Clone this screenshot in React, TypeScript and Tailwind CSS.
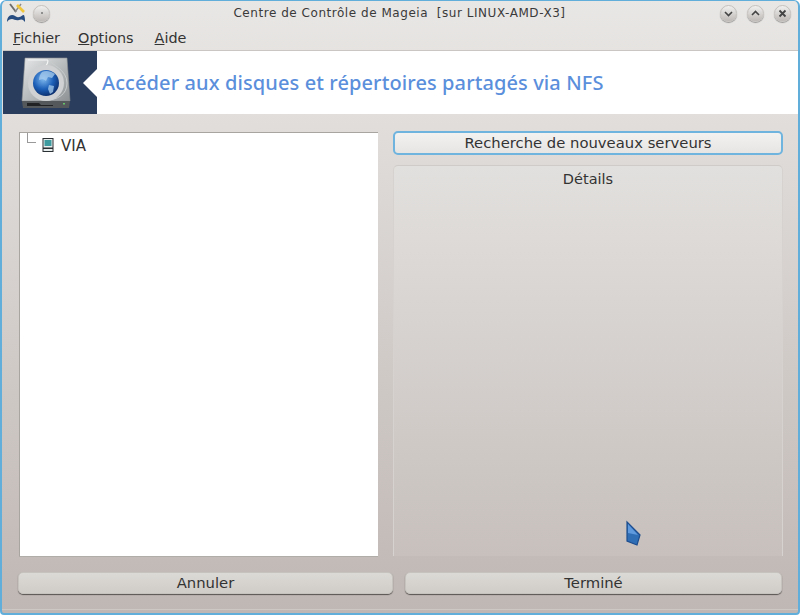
import React from "react";

const RoundBtn = ({ children }: { children?: React.ReactNode }) => (
  <div className="w-[17px] h-[17px] rounded-full bg-gradient-to-b from-[#f2f1f0] to-[#bdb9b6] border border-[#c4c1be] shadow-[0_1px_1px_rgba(0,0,0,0.35)] flex items-center justify-center">
    {children}
  </div>
);

const Button = ({ label, focused }: { label: string; focused?: boolean }) => (
  <div
    className={`rounded-[5px] flex items-center justify-center text-[14.8px] text-[#333] bg-gradient-to-b ${
      focused
        ? "h-[24px] from-[#f3f2f1] to-[#e7e5e3] border-2 border-[#6fb4de]"
        : "h-[22px] from-[#dcdad6] to-[#d0ccc8] border border-[#c6c2be] shadow-[0_1px_1px_rgba(0,0,0,0.55)]"
    }`}
  >
    {label}
  </div>
);

const DiskLogo = () => (
  <svg width="50" height="52" viewBox="0 0 50 52">
    <defs>
      <linearGradient id="case" x1="0" y1="0" x2="1" y2="1">
        <stop offset="0" stopColor="#e6e8e9" />
        <stop offset="1" stopColor="#8d9193" />
      </linearGradient>
      <radialGradient id="globe" cx="0.4" cy="0.35" r="0.7">
        <stop offset="0" stopColor="#7fb8ee" />
        <stop offset="0.55" stopColor="#1c5fb8" />
        <stop offset="1" stopColor="#0b2a66" />
      </radialGradient>
    </defs>
    <path d="M4 1H46L49 44H1Z" fill="url(#case)" stroke="#8a8e90" strokeWidth="0.6" />
    <path d="M7 3H27C27 8 24 10 22 12 18 12 13 14 10 19" fill="none" stroke="#f4f5f5" strokeWidth="1.2" />
    <path d="M27 2C30 8 46 12 46 26 46 38 36 43 25 43" fill="none" stroke="#c9cccd" strokeWidth="1" />
    <circle cx="25" cy="26" r="18" fill="#cfd1d2" />
    <circle cx="25" cy="26" r="13" fill="url(#globe)" />
    <path d="M21 15c4-2 9-1 13 2l-3 4-4-1-2 4-3-2-4 1c0-3 1-6 3-8ZM28 28l5 1-1 6-3 2-2-5Z" fill="#a9cdee" opacity="0.75" />
    <path d="M1 44H49L48 51H2Z" fill="#55585a" />
    <path d="M6 46H18L20 48H32V49H6Z" fill="#202224" />
    <rect x="42" y="46" width="2" height="1.5" fill="#67c26a" />
  </svg>
);

export default function App() {
  return (
    <div
      className="w-[800px] h-[615px] flex flex-col overflow-hidden rounded-t-[6px] rounded-b-[4px] border-x-2 border-t border-b-2 border-[#62aedb] bg-gradient-to-b from-[#e9e7e5] to-[#bfb7b3] text-[#333]"
      style={{ fontFamily: '"DejaVu Sans", sans-serif' }}
    >
      {/* Title bar */}
      <div className="h-[24px] shrink-0 flex items-center pl-[4px] pr-[7px]">
        <svg width="20" height="20" viewBox="0 0 20 20">
          <path d="M4 1l6 8" stroke="#6d6d6d" strokeWidth="1.8" />
          <path d="M15 1l-6 8" stroke="#8a8a8a" strokeWidth="1.4" />
          <path d="M11 2l7 7" stroke="#efc53a" strokeWidth="2.6" />
          <path d="M1 19c0-4 2-7 5-7 3 0 4 3 7 2 2 0 3-2 5-2 1 2 1 5 1 7-2-3-4-3-6-2-3 1-5-1-7-1-2 0-4 1-5 3Z" fill="#274d80" />
        </svg>
        <div className="ml-[7px]">
          <RoundBtn>
            <span className="block w-[2px] h-[2px] rounded-full bg-[#777]" />
          </RoundBtn>
        </div>
        <div className="flex-1 text-center text-[12px] tracking-[0.54px] whitespace-pre text-[#3a3a3a] pl-[29px]">
          {"Centre de Contrôle de Mageia  [sur LINUX-AMD-X3]"}
        </div>
        <div className="flex gap-[10px]">
          <RoundBtn>
            <svg width="11" height="11" viewBox="0 0 11 11">
              <path d="M2 4l3.5 3.5L9 4" fill="none" stroke="#444" strokeWidth="1.6" />
            </svg>
          </RoundBtn>
          <RoundBtn>
            <svg width="11" height="11" viewBox="0 0 11 11">
              <path d="M2 7l3.5-3.5L9 7" fill="none" stroke="#444" strokeWidth="1.6" />
            </svg>
          </RoundBtn>
          <RoundBtn>
            <svg width="11" height="11" viewBox="0 0 11 11">
              <path d="M2.5 2.5l6 6M8.5 2.5l-6 6" fill="none" stroke="#444" strokeWidth="1.8" />
            </svg>
          </RoundBtn>
        </div>
      </div>

      {/* Menu */}
      <div className="h-[25px] shrink-0 flex items-center pt-[2px] pl-[11px] text-[14.4px] text-[#333]">
        <span><span className="underline">F</span>ichier</span>
        <span className="ml-[18px]"><span className="underline">O</span>ptions</span>
        <span className="ml-[21px]"><span className="underline">A</span>ide</span>
      </div>

      {/* Banner */}
      <div className="h-[64px] shrink-0 flex items-center bg-white border-t border-[#c9c6c3] ml-[1px] -mr-[2px]">
        <div className="relative w-[94px] h-full bg-[#2b3d5d] flex items-center justify-center pr-[9px]">
          <DiskLogo />
          <div className="absolute right-0 top-[18px] w-0 h-0 border-y-[14px] border-y-transparent border-r-[14px] border-r-white" />
        </div>
        <div className="ml-[5px] text-[20px] font-medium text-[#5b8fdc] tracking-[0.1px]" style={{ fontFamily: '"Noto Sans", sans-serif' }}>
          Accéder aux disques et répertoires partagés via NFS
        </div>
      </div>

      {/* Content */}
      <div className="flex-1 flex flex-col pl-[16px] pr-[15px] pt-[16px] pb-[15px] min-h-0">
        <div className="flex-1 flex gap-[15px] min-h-0">
          <div className="w-[359px] ml-[1px] mt-[2px] bg-white border-l border-t border-[#a8a4a0] shadow-[0_1px_0_#b0aca8]">
            <div className="flex items-start h-[24px]">
              <div className="ml-[7px] w-[9px] h-[10px] border-l border-b border-[#999]" />
              <svg className="ml-[6px] mt-[5px]" width="12" height="14" viewBox="0 0 12 14">
                <rect x="1" y="0.5" width="10" height="13" fill="#e8eeee" stroke="#2a2f33" />
                <rect x="2.5" y="2" width="7" height="6" fill="#3d9a9e" />
                <rect x="1" y="9.5" width="10" height="1.5" fill="#2a2f33" />
              </svg>
              <span className="ml-[7px] mt-[4px] text-[15px] leading-[18px] text-[#333]">VIA</span>
            </div>
          </div>

          <div className="flex-1 flex flex-col gap-[10px] min-w-0 mt-[1px]">
            <Button label="Recherche de nouveaux serveurs" focused />
            <div className="flex-1 rounded-t-[5px] border-x border-t border-[#cfcbc8] border-x-[#d5d2cf] bg-gradient-to-b from-[#e2e0de] to-[#c7c0bc] text-center text-[14.5px] pt-[3px] text-[#333]">
              Détails
            </div>
          </div>
        </div>

        <div className="mt-[16px] flex gap-[12px]">
          <div className="w-[375px]"><Button label="Annuler" /></div>
          <div className="flex-1 mr-[1px]"><Button label="Terminé" /></div>
        </div>
      </div>

      {/* Bottom edge */}
      <div className="h-[4px] shrink-0 border-t border-[#cdc8c4]" />

      {/* Mouse pointer from the capture */}
      <svg className="absolute left-[625px] top-[520px]" width="18" height="28" viewBox="0 0 18 28">
        <path d="M2 2L15 15L12 25L2 21Z" fill="#2f6db5" stroke="#1d4d8e" strokeWidth="1.2" />
        <path d="M3 4L13 15L3 13Z" fill="#5f9ade" />
      </svg>
    </div>
  );
}
